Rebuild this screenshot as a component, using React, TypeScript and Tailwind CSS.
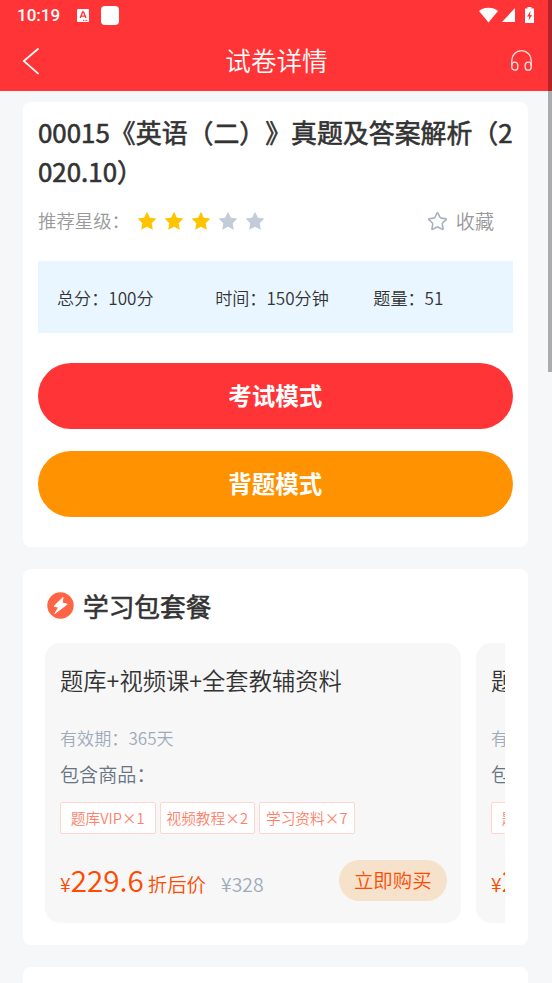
import { Star } from 'lucide-react'

const STAR = 'M10 0.8l2.9 5.9 6.5 0.9-4.7 4.6 1.1 6.5-5.8-3-5.8 3 1.1-6.5L0.6 7.6l6.5-0.9z'

const packages = [
  {
    title: '题库+视频课+全套教辅资料',
    days: 365,
    goods: ['题库VIP×1', '视频教程×2', '学习资料×7'],
    price: '229.6',
    origin: '328',
  },
  {
    title: '题库+视频课',
    days: 365,
    goods: ['题库VIP×1', '视频教程×2'],
    price: '229.6',
    origin: '328',
  },
]

function StatusBar() {
  return (
    <div className="flex h-[30px] items-center justify-between pl-[17px] pr-[18px] text-white">
      <div className="flex items-center">
        <span className="font-[Roboto] w-[60px] text-[17px] font-medium leading-[30px]">10:19</span>
        <svg className="block h-[13px] w-[12px]" viewBox="0 0 12 13">
          <rect width="12" height="13" rx="1" fill="#fff" />
          <path d="M3.2 9L5.6 3h1L9 9M4.2 7.1h3.6" fill="none" stroke="#ff3436" strokeWidth="1.4" />
          <path d="M6 11.4h5" stroke="#ff3436" strokeWidth="1" strokeDasharray="1 0.6" />
        </svg>
        <span className="ml-[12px] h-[19px] w-[18px] rounded-[4px] bg-white" />
      </div>
      <div className="flex items-center">
        <svg className="block h-[16px] w-[19px]" viewBox="0 0 19 16">
          <path d="M9.5 15.5L0 4C5 -0.2 14 -0.2 19 4z" fill="#fff" />
        </svg>
        <svg className="ml-[4px] block h-[14px] w-[13px]" viewBox="0 0 13 14">
          <path d="M13 0v14H0z" fill="#fff" />
        </svg>
        <svg className="ml-[10px] block h-[16px] w-[9px]" viewBox="0 0 9 16">
          <path d="M2.5 0h4v1.6H9V16H0V1.6h2.5z" fill="#fff" />
          <path d="M5.6 4L2 9.4h2.2L3.6 13.6 7 8H4.9z" fill="#ff3436" />
        </svg>
      </div>
    </div>
  )
}

function Header() {
  return (
    <header className="h-[91px] bg-[#ff3436]">
      <StatusBar />
      <div className="flex h-[61px] items-center justify-between pl-[22px] pr-[20px] text-white">
        <svg className="block h-[28px] w-[21px]" viewBox="0 0 21 28" fill="none" stroke="#fff" strokeWidth="1.7">
          <path d="M16.5 1.5L1.8 14l14.7 12.8" />
        </svg>
        <h1 className="mr-[1px] text-[25.6px] font-[350]">试卷详情</h1>
        <svg className="block h-[21px] w-[21px]" viewBox="0 0 21 21" fill="none" stroke="#ffe3e3" strokeWidth="1.3">
          <path d="M0.8 16V10.4a9.7 9.7 0 0 1 19.4 0V16" />
          <rect x="0.8" y="12.2" width="6" height="8" rx="3" />
          <rect x="14.2" y="12.2" width="6" height="8" rx="3" />
        </svg>
      </div>
    </header>
  )
}

function PackageCard({ item }: { item: (typeof packages)[number] }) {
  return (
    <div className="h-[280px] w-[416px] shrink-0 rounded-[15px] bg-[#f7f7f7] pl-[15px] pr-[14px] pt-[19px]">
      <h3 className="h-[36px] whitespace-nowrap text-[23.3px] font-[350] leading-[36px] text-[#333]">{item.title}</h3>
      <p className="mt-[27px] h-[26px] whitespace-nowrap text-[17.1px] leading-[26px] text-[#a0abb9]">有效期：{item.days}天</p>
      <p className="mt-[9px] h-[28px] whitespace-nowrap text-[19.1px] leading-[28px] text-[#677483]">包含商品：</p>
      <div className="mt-[14px] flex gap-[4px]">
        {item.goods.map((g) => (
          <span key={g} className="flex h-[32px] w-[95.5px] shrink-0 items-center justify-center whitespace-nowrap rounded-[2px] border border-[#ffd6cf] bg-white text-[14.7px] text-[#ff8069]">
            {g}
          </span>
        ))}
      </div>
      <div className="mt-[26px] flex h-[41px] items-center justify-between whitespace-nowrap">
        <div className="flex items-baseline pt-[2px] text-[19.4px] leading-[41px] text-[#ff4a00]">
          <span>¥</span>
          <span className="text-[29.7px]">{item.price}</span>
          <span className="ml-[4px]">折后价</span>
          <span className="ml-[15px] text-[#a0abb9]">¥{item.origin}</span>
        </div>
        <button className="h-[41px] w-[108.5px] shrink-0 rounded-full bg-[#f6e1cb] pb-[2px] text-[19.4px] text-[#ff4a00]">立即购买</button>
      </div>
    </div>
  )
}

export default function App() {
  return (
    <div className="relative h-[983px] w-[552px] overflow-hidden bg-[#f5f7f9] font-['Noto_Sans_CJK_SC',sans-serif] font-[350] text-[#333] [text-spacing-trim:space-all]">
      <Header />

      <main className="flex flex-col gap-[22px] pl-[23px] pr-[24.5px] pt-[11px]">
        <section className="h-[445px] rounded-[8px] bg-white px-[15px] pt-[10px]">
          <h2 className="whitespace-nowrap text-[25.9px] font-normal leading-[39px] [-webkit-text-stroke:0.6px_#333]">
            00015《英语（二）》真题及答案解析（2<br />020.10）
          </h2>
          <div className="mt-[17px] flex h-[28px] items-center">
            <span className="w-[99px] whitespace-nowrap text-[18.4px] text-[#999]">推荐星级：</span>
            <div className="flex gap-[7px]">
              {[1, 2, 3, 4, 5].map((n) => (
                <svg key={n} className={n <= 3 ? 'block size-[20px] text-[#ffc400]' : 'block size-[20px] text-[#c3cbd8]'} viewBox="0 0 20 20">
                  <path d={STAR} fill="currentColor" />
                </svg>
              ))}
            </div>
            <div className="ml-auto mr-[18.5px] flex items-center gap-[8px]">
              <Star className="size-[21px] text-[#a5b0c0]" strokeWidth={1.8} />
              <span className="text-[19.1px] text-[#999]">收藏</span>
            </div>
          </div>
          <div className="mt-[26px] grid h-[72px] grid-cols-3 items-center bg-[#e9f6ff] pt-[2px] text-[17.1px]">
            <span className="pl-[19px]">总分：100分</span>
            <span className="pl-[19px]">时间：150分钟</span>
            <span className="pl-[19px]">题量：51</span>
          </div>
          <button className="mt-[29.5px] block h-[66.5px] w-full rounded-full bg-[#ff3436] text-[23.5px] font-bold text-white">考试模式</button>
          <button className="mt-[22px] block h-[66px] w-full rounded-full bg-[#ff9200] text-[23.5px] font-bold text-white">背题模式</button>
        </section>

        <section className="h-[376px] rounded-[8px] bg-white pl-[22px] pr-[22px]">
          <div className="flex h-[74px] items-center">
            <svg className="mb-[1px] ml-[2px] block size-[27px]" viewBox="0 0 27 27">
              <circle cx="13.5" cy="13.5" r="13.2" fill="#ff6444" />
              <path d="M16 5.6L7 14.2l4.6 1.1-3.8 6.3 12.4-9.4-5-1.2z" fill="#fff" stroke="#fff" strokeWidth="1" strokeLinejoin="round" />
            </svg>
            <h2 className="ml-[9px] text-[25.7px] font-normal [-webkit-text-stroke:0.6px_#333]">学习包套餐</h2>
          </div>
          <div className="flex w-[460px] gap-[15px] overflow-hidden">
            {packages.map((p) => (
              <PackageCard key={p.title} item={p} />
            ))}
          </div>
        </section>

        <section className="h-[40px] rounded-[8px] bg-white" />
      </main>

      {/* scroll thumb runs over the header too */}
      <div className="absolute right-0 top-0 h-[372px] w-[4px] bg-black/30" />
    </div>
  )
}
